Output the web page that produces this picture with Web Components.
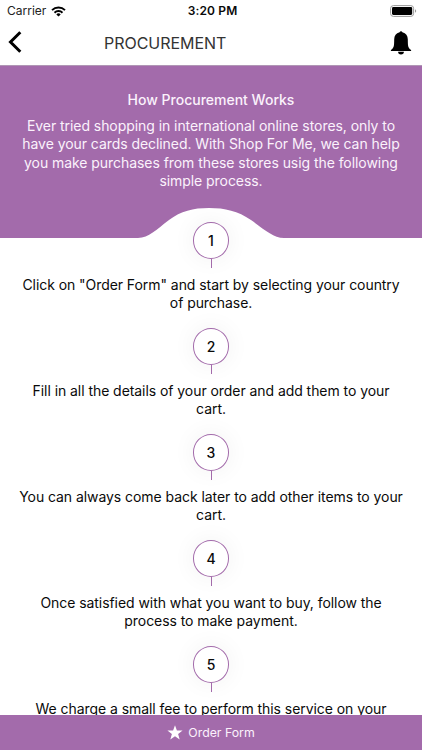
<!DOCTYPE html>
<html lang="en">
<head>
<meta charset="utf-8">
<meta name="viewport" content="width=device-width, initial-scale=1">
<title>Procurement</title>
<style>
  html, body {
    height: 100%;
    margin: 0;
  }
  body {
    --accent: #a36bab;
    background: #fff;
    color: #0a0a0a;
    font-family: Inter, "Liberation Sans", sans-serif;
    font-size: 14px;
    overflow: hidden;
  }
</style>
</head>
<body>
<procurement-page></procurement-page>

<script>
class StatusBar extends HTMLElement {
  connectedCallback() {
    this.attachShadow({ mode: 'open' });
    this.shadowRoot.innerHTML = `
      <style>
        :host {
          display: grid;
          grid-template-columns: 1fr auto 1fr;
          align-items: center;
          height: 22px;
          padding: 0 4px 0 7px;
          box-sizing: border-box;
          font-size: 12px;
          line-height: 22px;
        }
        .left {
          display: flex;
          align-items: center;
          gap: 5px;
        }
        .carrier {
          color: #222;
        }
        .time {
          font-weight: 600;
          letter-spacing: 0.15px;
        }
        .battery {
          justify-self: end;
        }
        svg {
          display: block;
        }
      </style>
      <div class="left">
        <span class="carrier">${this.getAttribute('carrier')}</span>
        <svg width="15" height="11" viewBox="0 0 15 11" fill="none" stroke="#000" stroke-width="1.9">
          <path d="M1 4.1a9.3 9.3 0 0 1 13 0"/>
          <path d="M3.5 6.7a5.7 5.7 0 0 1 8 0"/>
          <path d="M7.5 10.6 5.3 8.4a3.1 3.1 0 0 1 4.4 0z" fill="#000" stroke="none"/>
        </svg>
      </div>
      <span class="time">${this.getAttribute('time')}</span>
      <svg class="battery" width="28" height="12" viewBox="0 0 28 12">
        <rect x="0.6" y="0.6" width="23" height="10.8" rx="2.8" fill="#fff" stroke="#999"/>
        <rect x="2" y="2.1" width="20.2" height="7.8" rx="1.3"/>
        <path d="M25 4.2c1.6.6 1.6 3 0 3.6z" fill="#999"/>
      </svg>
    `;
  }
}

class NavHeader extends HTMLElement {
  connectedCallback() {
    this.attachShadow({ mode: 'open' });
    this.shadowRoot.innerHTML = `
      <style>
        :host {
          display: flex;
          align-items: flex-start;
          height: 44px;
          box-sizing: border-box;
          padding: 9px 10px 0 8px;
          border-bottom: 1px solid #b096b5;
        }
        h1 {
          flex: 1;
          margin: 0 0 0 82px;
          font-size: 16px;
          font-weight: 400;
          letter-spacing: -0.03px;
          line-height: 24px;
          color: #333;
        }
        svg {
          display: block;
        }
      </style>
      <svg width="14" height="22" viewBox="0 0 14 22" fill="none" stroke="#000" stroke-width="3">
        <path d="M12.300 1.300 2.500 11l9.800 9.700"/>
      </svg>
      <h1><slot></slot></h1>
      <svg width="22" height="24" viewBox="0 0 22 24">
        <path d="M9.600 1.200a1.500 1.500 0 0 1 2.800 0C16 2 17.700 4.800 17.800 8.200c.1 6.500 0 8.500 3.300 10.800v.9H.9V19c3.300-2.300 3.200-4.300 3.300-10.800C4.300 4.800 6 2 9.600 1.200z"/>
        <path d="M8.100 20.700h5.800a2.900 2.700 0 0 1-5.800 0z"/>
      </svg>
    `;
  }
}

class IntroPanel extends HTMLElement {
  connectedCallback() {
    this.attachShadow({ mode: 'open' });
    this.shadowRoot.innerHTML = `
      <style>
        :host {
          display: flex;
          flex-direction: column;
          align-items: center;
          justify-content: space-between;
          height: 172px;
          box-sizing: border-box;
          padding-top: 24px;
          background: var(--accent);
          color: #fbf2fc;
          text-align: center;
        }
        h2 {
          margin: 0 0 8px;
          font-size: 14px;
          font-weight: 500;
          line-height: 19px;
        }
        p {
          margin: 0;
          letter-spacing: -0.06px;
          line-height: 18.35px;
          white-space: nowrap;
        }
        svg {
          display: block;
        }
      </style>
      <div>
        <h2>${this.getAttribute('heading')}</h2>
        <p><slot></slot></p>
      </div>
      <svg width="146" height="30" viewBox="0 0 146 30">
        <path d="M0 30C11 29.500 18 22 31 12 43 3 55 0 71 0s29 3 42 12c14 10 22 17.500 33 18z" fill="#fff"/>
      </svg>
    `;
  }
}

class ProcessStep extends HTMLElement {
  connectedCallback() {
    this.attachShadow({ mode: 'open' });
    this.shadowRoot.innerHTML = `
      <style>
        :host {
          display: flex;
          flex-direction: column;
          align-items: center;
          height: 106px;
          text-align: center;
        }
        .number {
          width: 36.6px;
          height: 37px;
          box-sizing: border-box;
          border: 1px solid var(--accent);
          border-radius: 50%;
          background: #fff;
          box-shadow: 0 0 24px rgba(0, 0, 0, 0.06);
          font-weight: 500;
          line-height: 35px;
        }
        .stem {
          width: 1px;
          height: 9px;
          background: var(--accent);
        }
        p {
          margin: 8px 0 0;
          letter-spacing: -0.06px;
          line-height: 18.35px;
          white-space: nowrap;
        }
      </style>
      <div class="number">${this.getAttribute('number')}</div>
      <div class="stem"></div>
      <p><slot></slot></p>
    `;
  }
}

class OrderButton extends HTMLElement {
  connectedCallback() {
    this.attachShadow({ mode: 'open' });
    this.shadowRoot.innerHTML = `
      <style>
        :host {
          display: flex;
          align-items: center;
          justify-content: center;
          gap: 5px;
          height: 35px;
          background: var(--accent);
          color: #fbf2fc;
          font-size: 12.3px;
        }
      </style>
      <svg width="16" height="15" viewBox="0 0 16 15" fill="#fff">
        <path d="M8 .3l1.900 5.100 5.700.1-4.500 3.400 1.600 5.500L8 11.200l-4.700 3.200 1.600-5.500L.4 5.500l5.700-.1z"/>
      </svg>
      <span><slot></slot></span>
    `;
  }
}

class ProcurementPage extends HTMLElement {
  connectedCallback() {
    this.attachShadow({ mode: 'open' });
    this.shadowRoot.innerHTML = `
      <style>
        :host {
          display: flex;
          flex-direction: column;
          height: 100vh;
        }
        main {
          flex: 1;
          min-height: 0;
          overflow: hidden;
        }
        /* first step sits inside the bump of the panel */
        .steps {
          margin-top: -16px;
        }
      </style>
      <status-bar carrier="Carrier" time="3:20 PM"></status-bar>
      <nav-header>PROCUREMENT</nav-header>
      <main>
        <intro-panel heading="How Procurement Works">Ever tried shopping in international online stores, only to<br>have your cards declined. With Shop For Me, we can help<br>you make purchases from these stores usig the following<br>simple process.</intro-panel>
        <div class="steps">
          <process-step number="1">Click on "Order Form" and start by selecting your country<br>of purchase.</process-step>
          <process-step number="2">Fill in all the details of your order and add them to your<br>cart.</process-step>
          <process-step number="3">You can always come back later to add other items to your<br>cart.</process-step>
          <process-step number="4">Once satisfied with what you want to buy, follow the<br>process to make payment.</process-step>
          <process-step number="5">We charge a small fee to perform this service on your</process-step>
        </div>
      </main>
      <order-button>Order Form</order-button>
    `;
  }
}

customElements.define('status-bar', StatusBar);
customElements.define('nav-header', NavHeader);
customElements.define('intro-panel', IntroPanel);
customElements.define('process-step', ProcessStep);
customElements.define('order-button', OrderButton);
customElements.define('procurement-page', ProcurementPage);
</script>
</body>
</html>
